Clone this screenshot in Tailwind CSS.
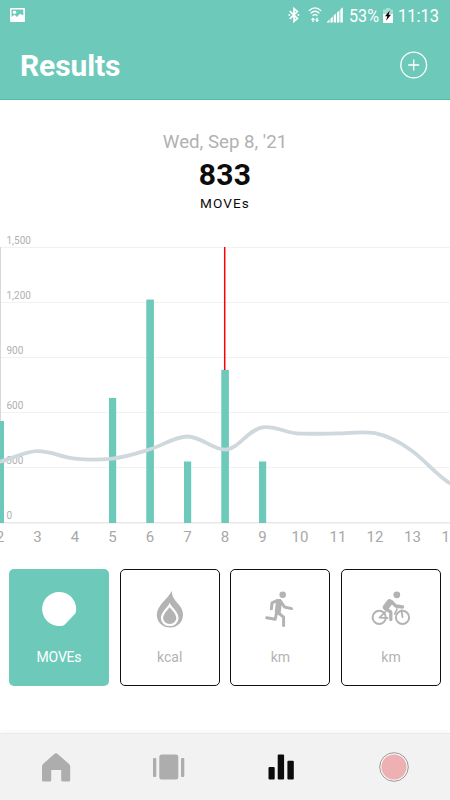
<!DOCTYPE html>
<html lang="en">
<head>
    <meta charset="UTF-8">
    <meta name="viewport" content="width=device-width, initial-scale=1.0">
    <title>Results</title>
    <script src="https://cdn.jsdelivr.net/npm/@tailwindcss/browser@4"></script>
</head>
<body class="bg-white font-['Roboto',sans-serif]">
    <div class="flex flex-col w-[450px] h-[800px] overflow-hidden">

        <header class="h-[100px] shrink-0 bg-[#6dcaba] border-b border-[#50bba8] text-white">
            <!-- Status bar -->
            <div class="flex items-center h-[30px] pl-[10px] pr-[11px]">
                <svg class="w-[15px] h-[14px]" viewBox="0 0 15 14">
                    <path fill="#fff" fill-rule="evenodd" d="M1 0H14Q15 0 15 1V13Q15 14 14 14H1Q0 14 0 13V1Q0 0 1 0ZM1.5 1.5V9L4.5 6.8L7 9L10 5.8L13.3 7.5V1.5Z"/>
                    <circle cx="4.5" cy="4.2" r="1.7" fill="#fff"/>
                </svg>
                <svg class="ml-auto w-[12px] h-[18px]" viewBox="0 0 12 18" fill="none" stroke="#fff" stroke-width="1.7">
                    <path d="M1.8 5.2L9.4 12.4L6 15.4V2.6L9.4 5.6L1.8 12.8"/>
                    <path d="M.6 9h1.6M9.6 9H11.2" stroke-width="1.8"/>
                </svg>
                <svg class="ml-[8px] w-[14px] h-[18px]" viewBox="0 0 14 18" fill="none" stroke="#fff" stroke-width="1.3">
                    <path d="M.8 4.9Q7 -1.1 13.2 4.9M2.6 7.4Q7 3.2 11.4 7.4M4.6 9.8Q7 7.5 9.4 9.8"/>
                    <path fill="#fff" stroke="none" d="M5 11.5L7.2 14H5.7V16H4.3V14H2.8ZM9 16.3L6.9 13.8H8.3V11.8H9.7V13.8H11.2Z"/>
                </svg>
                <svg class="ml-[5px] w-[16px] h-[16px]" viewBox="0 0 16 16" fill="#fff">
                    <path d="M0 15.5V14.7L2.5 12.5V15.5ZM3.4 15.5V11.7L5.8 9.5V15.5ZM6.7 15.5V8.6L9.1 6.4V15.5ZM10 15.5V5.6L12.4 3.4V15.5ZM13.3 15.5V2.5L15.8 .3V15.5Z"/>
                </svg>
                <svg class="ml-[6px] w-[31px] h-[24px] overflow-visible" viewBox="0 0 31 24">
                    <text transform="scale(.833 1)" x="0" y="19.3" font-size="19" fill="#fff" textLength="36" lengthAdjust="spacingAndGlyphs">53%</text>
                </svg>
                <svg class="ml-[3px] w-[10px] h-[15px]" viewBox="0 0 10 15">
                    <path fill="#fff" fill-opacity=".4" d="M3 0H7V1.5H10V6H0V1.5H3Z"/>
                    <path fill="#fff" d="M0 6H10V15H0Z"/>
                    <path fill="#000" d="M6.8 2.4L2 8.2H4.4L3 12.8L8 6.8H5.6Z"/>
                </svg>
                <svg class="ml-[5.5px] w-[41px] h-[24px] overflow-visible" viewBox="0 0 41 24">
                    <text transform="scale(.87 1)" x="0" y="19.3" font-size="19" fill="#fff" textLength="47" lengthAdjust="spacingAndGlyphs">11:13</text>
                </svg>
            </div>
            <div class="flex items-center justify-between h-[69px] pl-[20px] pr-[22px]">
                <h1 class="text-[30px] leading-[40px] font-bold pt-[2px] tracking-[-.1px]">Results</h1>
                <svg class="w-[28px] h-[28px]" viewBox="0 0 28 28" fill="none" stroke="#fff" stroke-width="1.3">
                    <circle cx="13.7" cy="14" r="12.9"/>
                    <path d="M13.7 8.5V19.5M8.2 14H19.2"/>
                </svg>
            </div>
        </header>

        <section class="flex flex-col items-center h-[130px] shrink-0 pt-[30px]">
            <p class="text-[18.7px] leading-[24px] text-[#b1b1b1]">Wed, Sep 8, '21</p>
            <p class="text-[30px] leading-[36px] mt-[3px] font-bold text-[#0c0c0c] tracking-[.3px]">833</p>
            <p class="text-[13.6px] leading-[18px] mt-[1px] text-[#0c0c0c] tracking-[1.1px]">MOVEs</p>
        </section>

        <!-- Monthly chart -->
        <svg class="w-[450px] h-[320px] shrink-0" viewBox="0 230 450 320">
            <g stroke="#f2f2f2">
                <path d="M0 247.5H450M0 302.5H450M0 357.5H450M0 412.5H450M0 467.5H450"/>
                <path d="M0 522.8H450" stroke="#e8e8e8" stroke-width="1.5"/>
                <path d="M.5 247V523" stroke="#d8d8d8"/>
            </g>
            <g fill="#6dcaba">
                <rect x="-4" y="421" width="8" height="102"/>
                <rect x="109" y="398" width="7.2" height="125"/>
                <rect x="146.3" y="299.6" width="7.6" height="223.4"/>
                <rect x="184" y="461.5" width="7.2" height="61.5"/>
                <rect x="221.3" y="369.8" width="7.6" height="153.2"/>
                <rect x="259" y="461.5" width="7.2" height="61.5"/>
            </g>
            <path d="M224.7 247V370" stroke="#f00" stroke-width="1.5"/>
            <g font-size="10" fill="#b0b0b0">
                <text x="6.5" y="244">1,500</text>
                <text x="6.5" y="299">1,200</text>
                <text x="6.5" y="354">900</text>
                <text x="6.5" y="409">600</text>
                <text x="6.5" y="464.3">300</text>
                <text x="6.5" y="519.3">0</text>
            </g>
            <path fill="none" stroke="#cfd8dc" stroke-width="3.8" d="M-2 462C10 460 24 451.2 37.5 451.2C52 451.2 60 457 75 458.7C88 460.2 100 460 112.5 458.6C126 457 138 453 150 449.3C163 445.3 175 436.5 187.5 436.5C201 436.5 213 449.7 225 449.7C238 449.7 248 429.5 262.5 427.4C276 425.6 286 433.3 300 433.6C313 434 325 433.6 337.5 433.4C350 433.2 362 430.9 375 433.2C388 435.8 402 443.5 412.5 451.2C426 461 438 477 452 484.5"/>
            <g font-size="15" fill="#a8a8a8" text-anchor="middle">
                <text x="0" y="542">2</text>
                <text x="37.5" y="542">3</text>
                <text x="75" y="542">4</text>
                <text x="112.5" y="542">5</text>
                <text x="150" y="542">6</text>
                <text x="187.5" y="542">7</text>
                <text x="225" y="542">8</text>
                <text x="262.5" y="542">9</text>
                <text x="300" y="542">10</text>
                <text x="338" y="542">11</text>
                <text x="375" y="542">12</text>
                <text x="412.5" y="542">13</text>
                <text x="450" y="542">14</text>
            </g>
        </svg>

        <!-- Metric cards -->
        <section class="grid grid-cols-4 gap-[10.7px] px-[9px] mt-[18.5px] h-[117.5px] shrink-0 text-center text-[14px] leading-[18px] text-[#b3b3b3]">
            <div class="flex flex-col items-center rounded-[5px] bg-[#6dcaba] text-white pt-[20px]">
                <svg class="w-[40px] h-[40px]" viewBox="0 0 40 40">
                    <path fill="#fff" d="M24.5 36.4A17 17 0 1 1 36.8 23.3Q36.5 24.3 35.8 25L26.6 34.8Q25.6 36 24.5 36.4Z"/>
                </svg>
                <span class="mt-[19px] tracking-[-.2px]">MOVEs</span>
            </div>
            <div class="flex flex-col items-center rounded-[5px] border border-[#111] pt-[19px]">
                <svg class="w-[40px] h-[40px]" viewBox="0 0 40 40">
                    <path fill="#b3b3b3" d="M21.8 1.8C22 8 24.5 10.5 27.8 14.5C31 18 33 21 33 25.8C33 33.5 27 38.6 20 38.6C13 38.6 6.8 33.5 6.8 25.8C6.8 16.5 18 10 21.8 1.8Z"/>
                    <path fill="#b3b3b3" stroke="#fff" stroke-width="2.2" d="M19.7 16.2C18 19.5 12 23.4 12 28.9C12 33.2 15.4 36 19.7 36C24 36 27.4 33.2 27.4 28.9C27.4 23.4 21.4 19.5 19.7 16.2Z"/>
                </svg>
                <span class="mt-[19px]">kcal</span>
            </div>
            <div class="flex flex-col items-center rounded-[5px] border border-[#111] pt-[19px]">
                <svg class="w-[40px] h-[40px]" viewBox="0 0 40 40" fill="none" stroke="#b3b3b3" stroke-width="3" stroke-linecap="round" stroke-linejoin="round">
                    <circle cx="22.7" cy="5.8" r="3.3" fill="#b3b3b3" stroke="none"/>
                    <path d="M17.5 11.5L12 13.8L11.4 19.8M20.5 12L24.5 18L31.5 19.6"/>
                    <path d="M19 13L17.8 22.5" stroke-width="6"/>
                    <path d="M16.5 24L15.2 30.3L6.7 28.7M18.5 24L23.6 28.2V36.4"/>
                </svg>
                <span class="mt-[19px]">km</span>
            </div>
            <div class="flex flex-col items-center rounded-[5px] border border-[#111] pt-[19px]">
                <svg class="w-[40px] h-[40px]" viewBox="0 0 40 40" fill="none" stroke="#b3b3b3" stroke-linecap="round" stroke-linejoin="round">
                    <circle cx="25.8" cy="5.8" r="3.4" fill="#b3b3b3" stroke="none"/>
                    <g stroke-width="2">
                        <circle cx="8.2" cy="28.4" r="6.6"/>
                        <circle cx="31.5" cy="28.4" r="6.6"/>
                    </g>
                    <path d="M8.5 28.6L14.4 22.8M8.5 28.6L16.5 29M31.5 28.2L30.5 21.5M26 20L23.8 25" stroke-width="1.8"/>
                    <path d="M18.6 13.4L15 18.2" stroke-width="6.4"/>
                    <path d="M20.5 12.8L24.8 17L31.6 18M14.5 19.8L19.8 23V30.5" stroke-width="3.3"/>
                </svg>
                <span class="mt-[19px]">km</span>
            </div>
        </section>

        <!-- Bottom navigation -->
        <nav class="grid grid-cols-4 items-center justify-items-center mt-auto h-[67px] bg-[#f2f2f2] border-t border-[#ebebeb] shadow-[0_-1px_4px_#0000000d]">
            <svg class="w-[30px] h-[30px]" viewBox="0 0 30 30">
                <path fill="#adadad" d="M1 14.5Q1 13 2 12L13 2.2Q15 .5 17 2.2L28 12Q29.2 13 29.2 14.5V28Q29.2 29.5 27.7 29.5H21.7Q20.2 29.5 20.2 28V18H10.2V28Q10.2 29.5 8.7 29.5H2.5Q1 29.5 1 28Z"/>
            </svg>
            <svg class="w-[32px] h-[26px]" viewBox="0 0 32 26" fill="#adadad">
                <rect x="0" y="4" width="3.3" height="19" rx="1"/>
                <rect x="6.3" y=".5" width="19" height="25" rx="2.5"/>
                <rect x="28" y="4" width="3.3" height="19" rx="1"/>
            </svg>
            <svg class="w-[26px] h-[26px]" viewBox="0 0 26 26" fill="#0c0c0c">
                <rect x=".5" y="13" width="6.2" height="12.5" rx="1"/>
                <rect x="9.7" y=".5" width="6.4" height="25" rx="1"/>
                <rect x="19.4" y="6.7" width="6.4" height="18.8" rx="1"/>
            </svg>
            <svg class="w-[30px] h-[30px]" viewBox="0 0 30 30">
                <circle cx="15" cy="15" r="14.3" fill="#f8f8f8" stroke="#999" stroke-width="1"/>
                <circle cx="15" cy="15" r="12.6" fill="#edb1b3"/>
            </svg>
        </nav>
    </div>
</body>
</html>
